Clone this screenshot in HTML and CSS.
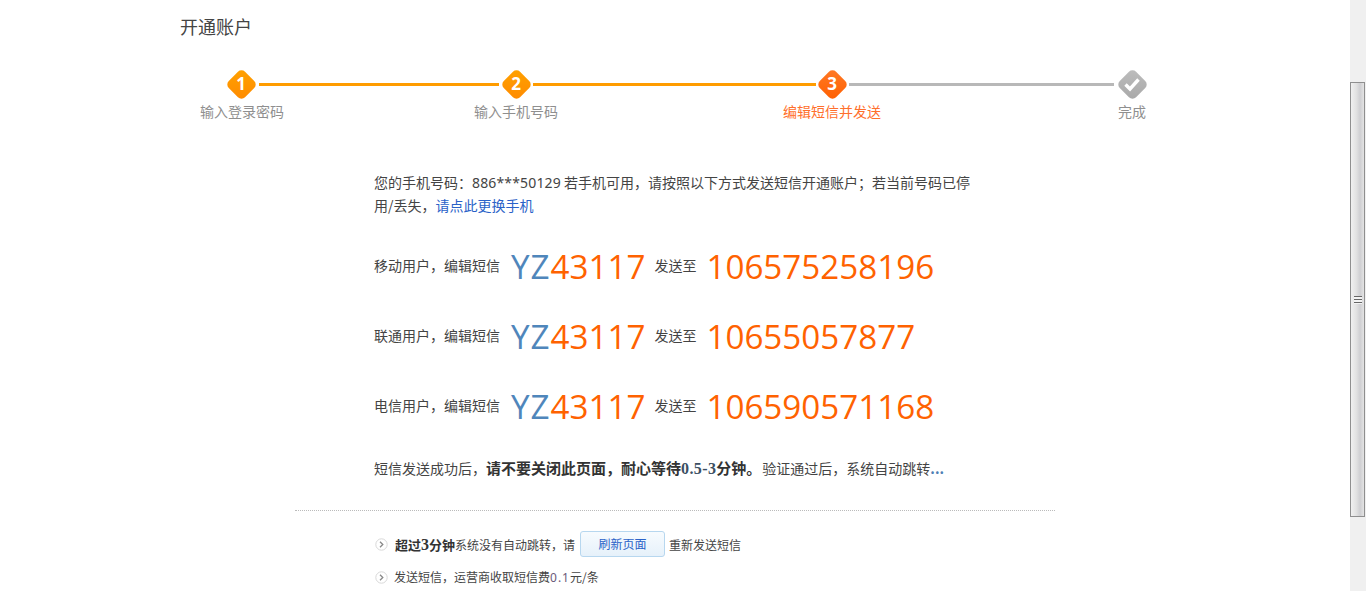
FILE: index.html
```html
<!DOCTYPE html>
<html lang="zh-CN">
<head>
<meta charset="utf-8">
<title>开通账户</title>
<link rel="stylesheet" href="styles.css">
</head>
<body>
<div class="shell">
  <main class="page">
    <h1 class="title">开通账户</h1>
    <div class="track">
      <span class="node orange"><b>1</b></span>
      <span class="line orange-line l1"></span>
      <span class="node orange"><b>2</b></span>
      <span class="line orange-line l2"></span>
      <span class="node deep"><b>3</b></span>
      <span class="line grey-line l3"></span>
      <span class="node grey"><svg class="tick" width="18" height="16" viewBox="0 0 18 16"><path d="M2.5 8.5 L7 13 L15.5 3.5" fill="none" stroke="#fff" stroke-width="3.4"/></svg></span>
    </div>
    <div class="labels">
      <span class="lab lab1">输入登录密码</span>
      <span class="lab lab2">输入手机号码</span>
      <span class="lab lab3 active">编辑短信并发送</span>
      <span class="lab lab4">完成</span>
    </div>
    <section class="body">
      <p class="intro">您的手机号码：<span class="num">886***50129</span> 若手机可用，请按照以下方式发送短信开通账户；若当前号码已停<br>用/丢失，<a class="link" href="#">请点此更换手机</a></p>
      <div class="sms"><span class="sms-label">移动用户，编辑短信</span><span class="code"><i>YZ</i>43117</span><span class="sms-label">发送至</span><span class="phone">106575258196</span></div>
      <div class="sms"><span class="sms-label">联通用户，编辑短信</span><span class="code"><i>YZ</i>43117</span><span class="sms-label">发送至</span><span class="phone">10655057877</span></div>
      <div class="sms"><span class="sms-label">电信用户，编辑短信</span><span class="code"><i>YZ</i>43117</span><span class="sms-label">发送至</span><span class="phone">106590571168</span></div>
      <p class="wait">短信发送成功后，<strong>请不要关闭此页面，耐心等待<span class="serif">0.5-3</span>分钟。</strong>验证通过后，系统自动跳转<span class="dots">...</span></p>
    </section>
    <div class="rule"></div>
    <ul class="notes">
      <li class="note first"><svg class="chev" width="13" height="13" viewBox="0 0 13 13"><circle cx="6.5" cy="6.5" r="5.7" fill="#fff" stroke="#d8d8d8"/><path d="M5 3.8 L7.8 6.5 L5 9.2" fill="none" stroke="#888" stroke-width="1.3"/></svg><span><strong class="over">超过<span class="num-b">3</span>分钟</strong>系统没有自动跳转，请</span><a class="btn" href="#">刷新页面</a><span>重新发送短信</span></li>
      <li class="note"><svg class="chev" width="13" height="13" viewBox="0 0 13 13"><circle cx="6.5" cy="6.5" r="5.7" fill="#fff" stroke="#d8d8d8"/><path d="M5 3.8 L7.8 6.5 L5 9.2" fill="none" stroke="#888" stroke-width="1.3"/></svg><span>发送短信，运营商收取短信费<span class="fee">0.1</span>元/条</span></li>
    </ul>
  </main>
  <div class="scrollbar">
    <div class="thumb"><span class="grip"></span></div>
  </div>
</div>
</body>
</html>
```
FILE: styles.css
```css
* { box-sizing: border-box; }
html, body { margin: 0; padding: 0; height: 591px; overflow: hidden; background: #fff; }
body { font-family: "Noto Sans CJK SC", "Liberation Sans", sans-serif; font-size: 14px; color: #444; }
.shell { display: flex; height: 591px; overflow: hidden; }
.page { flex: 1; min-width: 0; padding: 13px 0 0 180px; }
.title { margin: 0; font-size: 18px; line-height: 26px; font-weight: 400; color: #444; }
.track { display: flex; align-items: center; height: 30px; margin-top: 30px; padding-left: 46px; }
.node { flex: none; width: 30px; height: 30px; position: relative; display: flex; align-items: center; justify-content: center; color: #fff; }
.node::before { content: ""; position: absolute; left: 3.5px; top: 3.5px; width: 23px; height: 23px; border-radius: 5px; transform: rotate(45deg); }
.node b, .tick { position: relative; }
.node b { font-family: "Open Sans", sans-serif; font-size: 17px; line-height: 30px; font-weight: 700; }
.orange::before { background: linear-gradient(135deg, #ffa200, #ff8a00); }
.deep::before { background: linear-gradient(135deg, #ff7a26, #ff5f00); }
.grey::before { background: linear-gradient(135deg, #bdbdbd, #a8a8a8); }
.line { flex: none; height: 3px; }
.orange-line { background: #ff9c00; }
.grey-line { background: #b8b8b8; }
.l1 { width: 240px; margin: 0 2px 0 3px; }
.l2 { width: 283px; margin: 0 1px 0 2px; }
.l3 { width: 265px; margin: 0 3px 0 2px; }
.labels { display: flex; height: 20px; margin-top: 2px; padding-left: 20px; font-size: 14px; line-height: 20px; color: #8f8f8f; }
.lab { flex: none; }
.lab1 { width: 274px; }
.lab2 { width: 309px; }
.lab3 { width: 335px; }
.active { color: #ff6f2c; }
.body { width: 620px; margin-left: 194px; padding-top: 50px; }
.intro { margin: 0; line-height: 23px; white-space: nowrap; }
.num { font-family: "Noto Sans", sans-serif; letter-spacing: .15px; word-spacing: 1px; }
.link { color: #2a62c8; text-decoration: none; }
.sms { display: flex; align-items: flex-start; height: 40px; margin-top: 30px; white-space: nowrap; }
.intro + .sms { margin-top: 29px; }
.sms-label { line-height: 38px; }
.code, .phone { font-family: "Open Sans", sans-serif; font-size: 33.2px; font-weight: 500; line-height: 42px; color: #ff6200; }
.code { margin: 0 9px 0 11px; }
.code i { font-style: normal; color: #4f86bb; letter-spacing: 1px; }
.phone { margin-left: 10px; }
.wait { margin: 32px 0 0; line-height: 20px; white-space: nowrap; }
.wait strong { color: #333; font-size: 15px; margin-right: 1px; }
.serif { font-family: "Liberation Serif", serif; font-size: 16px; letter-spacing: .4px; color: #3c4f63; }
.dots { font-weight: 700; color: #4f7fb5; }
.rule { width: 760px; margin: 31px 0 0 115px; border-top: 1px dotted #bbb; }
.notes { list-style: none; margin: 0; padding: 20px 0 0 195px; font-size: 12px; }
.note { display: flex; align-items: center; height: 26px; color: #444; }
.note.first { margin-bottom: 7px; }
.chev { flex: none; margin-right: 6px; }
.over { font-size: 13px; color: #333; margin-left: 1px; }
.num-b { font-family: "Liberation Serif", serif; font-size: 16px; line-height: 1; }
.fee { font-family: "Noto Sans", sans-serif; letter-spacing: 1px; color: #6b5a7a; }
.btn { width: 85px; height: 26px; margin: 0 4px 0 5px; border: 1px solid #b7d7ef; border-radius: 3px; background: linear-gradient(#f7fbfe, #e6f1fa); color: #2a62c8; text-align: center; line-height: 24px; text-decoration: none; }
.scrollbar { flex: none; width: 16px; height: 591px; padding: 82px 1px 74px 0; background: #f0f0f0; }
.thumb { height: 435px; display: flex; align-items: center; justify-content: center; border: 1px solid #8f8f8f; background: linear-gradient(90deg, #f0f0f0, #e2e2e2 40%, #cfcfd2 70%, #e4e4e4); }
.grip { width: 8px; height: 8px; background: repeating-linear-gradient(#666 0 1px, #f4f4f4 1px 3px); }
```
